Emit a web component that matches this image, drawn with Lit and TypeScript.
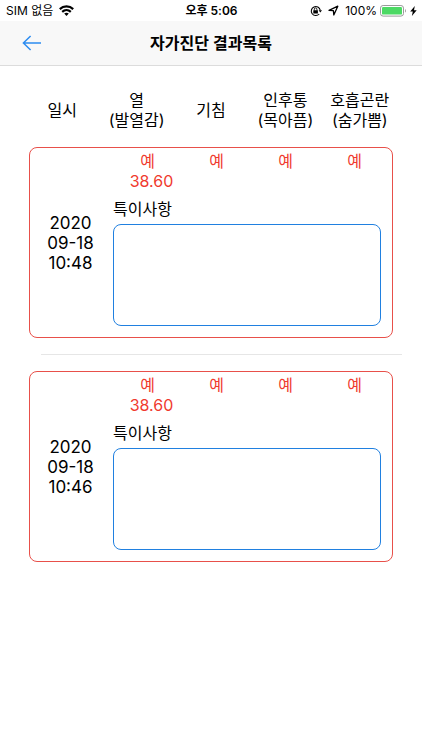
import { LitElement, html, css, svg } from "lit";
import { customElement, property } from "lit/decorators.js";

interface SelfCheck {
  id: string;
  date: string[];
  temperature: string;
  answers: string[];
  note: string;
}

const COLUMNS: string[][] = [
  ["일시"],
  ["열", "(발열감)"],
  ["기침"],
  ["인후통", "(목아픔)"],
  ["호흡곤란", "(숨가쁨)"],
];

const RECORDS: SelfCheck[] = [
  { id: "r1", date: ["2020", "09-18", "10:48"], temperature: "38.60", answers: ["예", "예", "예", "예"], note: "" },
  { id: "r2", date: ["2020", "09-18", "10:46"], temperature: "38.60", answers: ["예", "예", "예", "예"], note: "" },
];

const lines = (parts: string[]) => parts.map((p) => html`<span class="line">${p}</span>`);

@customElement("status-bar")
export class StatusBar extends LitElement {
  static styles = css`
    :host {
      display: grid;
      grid-template-columns: 1fr auto 1fr;
      align-items: center;
      height: 21px;
      padding: 0 5px 0 6px;
      background: #fff;
      font-size: 12px;
      line-height: 20px;
      color: #000;
    }
    .side {
      display: flex;
      align-items: center;
      gap: 6px;
    }
    .right {
      justify-content: flex-end;
    }
    .time {
      font-weight: 600;
    }
    .power {
      display: flex;
      align-items: center;
      gap: 3px;
    }
    svg {
      display: block;
    }
  `;

  render() {
    return html`
      <div class="side">
        <span>SIM 없음</span>
        <svg width="15" height="11" viewBox="0 0 15 11" aria-label="Wi-Fi">
          ${svg`<g fill="none" stroke="#000" stroke-width="2.2">
            <path d="M.8 4.1C4.6.5 10.4.5 14.2 4.1"/>
            <path d="M3.2 6.9c2.5-2.3 6.1-2.3 8.6 0"/>
          </g><path d="M5.2 8.6c1.4-1.2 3.2-1.2 4.6 0L7.5 10.9z"/>`}
        </svg>
      </div>
      <span class="time">오후 5:06</span>
      <div class="side right">
        <svg width="12" height="12" viewBox="0 0 12 12" aria-label="화면 회전 잠금">
          ${svg`<path d="M9.2 9A4.5 4.5 0 1 1 10.2 5.2" fill="none" stroke="#000" stroke-width="1.1"/>
            <path d="M8.6 5.2H12l-1.7 2.4z"/>
            <rect x="3.3" y="5.2" width="4.6" height="3.4" rx=".4"/>
            <path d="M4.3 5.5V4.2a1.3 1.3 0 0 1 2.6 0v1.3" fill="none" stroke="#000" stroke-width=".9"/>`}
        </svg>
        <svg width="11" height="11" viewBox="0 0 11 11" aria-label="위치">
          ${svg`<path d="M1 5.3 9.8 1.2 5.8 10 5.4 5.7z" fill="none" stroke="#000" stroke-width="1.3" stroke-linejoin="round"/>`}
        </svg>
        <div class="power">
          <span>100%</span>
          <svg width="27" height="12" viewBox="0 0 27 12" aria-label="배터리">
            ${svg`<rect x=".5" y=".5" width="23" height="10.6" rx="2.6" fill="#fff" stroke="#9a9a9a"/>
              <rect x="2" y="2" width="20" height="7.6" rx="1.2" fill="#4cd964"/>
              <path d="M25 4v3.6c1.2-.5 1.2-3.1 0-3.6z" fill="#9a9a9a"/>`}
          </svg>
          <svg width="7" height="10" viewBox="0 0 7 10" aria-label="충전 중">
            ${svg`<path d="M4.8 0 .2 5.6h2.6L1.9 10l4.8-5.8H4z"/>`}
          </svg>
        </div>
      </div>
    `;
  }
}

@customElement("nav-bar")
export class NavBar extends LitElement {
  @property() heading = "";

  static styles = css`
    :host {
      display: grid;
      grid-template-columns: 64px 1fr 64px;
      align-items: center;
      height: 44px;
      background: #f8f8f8;
      border-bottom: 1px solid #dcdcdc;
    }
    .back {
      display: flex;
      align-items: center;
      justify-content: center;
      height: 44px;
      padding: 0;
      border: 0;
      background: none;
      cursor: pointer;
    }
    h1 {
      margin: 0;
      font-size: 16px;
      line-height: 24px;
      font-weight: 600;
      text-align: center;
      color: #000;
    }
  `;

  render() {
    return html`
      <button class="back" type="button" aria-label="뒤로">
        <svg width="20" height="16" viewBox="0 0 20 16">
          ${svg`<path d="M8.6 1 1.4 8l7.2 7M1.4 8H19" fill="none" stroke="#2d8cf0" stroke-width="1.5"/>`}
        </svg>
      </button>
      <h1>${this.heading}</h1>
    `;
  }
}

@customElement("app-root")
export class AppRoot extends LitElement {
  static styles = css`
    :host {
      display: block;
      min-height: 100vh;
      background: #fff;
      color: #000;
      font-family: Inter, "Noto Sans CJK KR", sans-serif;
      font-size: 16px;
      line-height: 20px;
    }
    .line {
      display: block;
    }
    main {
      padding: 24px 29px;
    }
    .results,
    .columns,
    .record {
      display: block;
    }
    th,
    td {
      padding: 0;
      font-weight: 400;
      text-align: center;
    }
    .columns tr {
      display: grid;
      grid-template-columns: repeat(5, 1fr);
      align-items: center;
      margin: 0 -4px 17px;
    }
    .record + .record::before {
      content: "";
      display: block;
      height: 1px;
      margin: 16px -9px 16px 12px;
      background: #e6e6e6;
    }
    .card {
      display: grid;
      grid-template-columns: 83px repeat(4, 1fr);
      grid-template-rows: 48px auto;
      padding: 3px 3px 11px 0;
      border: 1px solid #e8504a;
      border-radius: 8px;
    }
    .date {
      grid-row: 1 / 3;
      align-self: center;
      padding: 8px 2px 0 0;
      font-size: 17px;
    }
    .answer {
      color: #f03a2e;
    }
    .temperature {
      padding-left: 8px;
    }
    .note {
      grid-column: 2 / 6;
      padding-right: 8px;
      text-align: left;
    }
    .note label {
      display: block;
      margin-bottom: 5px;
    }
    .note textarea {
      display: block;
      box-sizing: border-box;
      width: 100%;
      height: 102px;
      padding: 8px;
      border: 1px solid #2080e0;
      border-radius: 8px;
      outline: none;
      resize: none;
      background: #fff;
      font: inherit;
    }
  `;

  private renderRecord(r: SelfCheck) {
    return html`
      <tbody class="record">
        <tr class="card">
          <th class="date" scope="row">${lines(r.date)}</th>
          ${r.answers.map(
            (a, i) => html`<td class="answer">
              <span class="line">${a}</span>
              ${i === 0 ? html`<span class="line temperature">${r.temperature}</span>` : null}
            </td>`
          )}
          <td class="note">
            <label for=${r.id}>특이사항</label>
            <textarea id=${r.id} .value=${r.note} readonly></textarea>
          </td>
        </tr>
      </tbody>
    `;
  }

  render() {
    return html`
      <status-bar></status-bar>
      <nav-bar heading="자가진단 결과목록"></nav-bar>
      <main>
        <table class="results">
          <thead class="columns">
            <tr>
              ${COLUMNS.map((c) => html`<th scope="col">${lines(c)}</th>`)}
            </tr>
          </thead>
          ${RECORDS.map((r) => this.renderRecord(r))}
        </table>
      </main>
    `;
  }
}
